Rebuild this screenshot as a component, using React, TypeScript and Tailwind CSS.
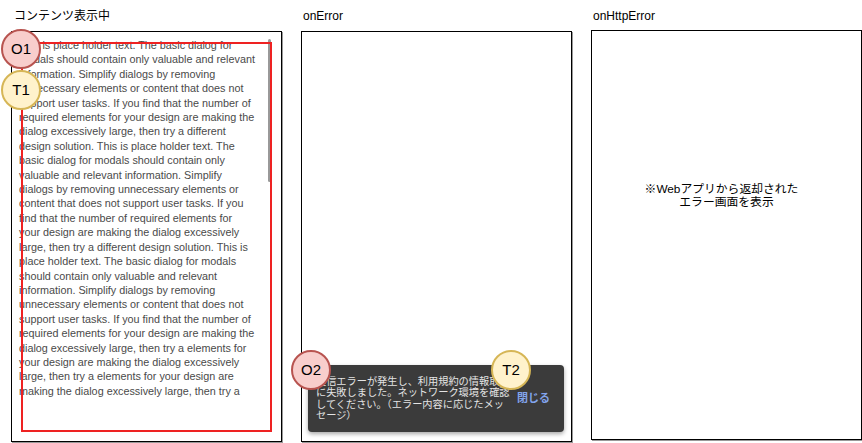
const bodyLines = [
  "This is place holder text. The basic dialog for",
  "modals should contain only valuable and relevant",
  "information. Simplify dialogs by removing",
  "unnecessary elements or content that does not",
  "support user tasks. If you find that the number of",
  "required elements for your design are making the",
  "dialog excessively large, then try a different",
  "design solution. This is place holder text. The",
  "basic dialog for modals should contain only",
  "valuable and relevant information. Simplify",
  "dialogs by removing unnecessary elements or",
  "content that does not support user tasks. If you",
  "find that the number of required elements for",
  "your design are making the dialog excessively",
  "large, then try a different design solution. This is",
  "place holder text. The basic dialog for modals",
  "should contain only valuable and relevant",
  "information. Simplify dialogs by removing",
  "unnecessary elements or content that does not",
  "support user tasks. If you find that the number of",
  "required elements for your design are making the",
  "dialog excessively large, then try a elements for",
  "your design are making the dialog excessively",
  "large, then try a elements for your design are",
  "making the dialog excessively large, then try a",
];

const sans = "font-['Liberation_Sans','Noto_Sans_CJK_JP',sans-serif]";

function Marker({ label, tone, className }: { label: string; tone: "red" | "yellow"; className: string }) {
  const colors =
    tone === "red"
      ? "bg-[#f8cecc] border-[#b85450]"
      : "bg-[#fff2cc] border-[#d6b656]";
  return (
    <div
      className={`absolute z-10 flex h-[40px] w-[40px] items-center justify-center rounded-full border-2 text-[15px] text-black ${colors} ${className}`}
    >
      {label}
    </div>
  );
}

function Title({ children, className = "" }: { children: React.ReactNode; className?: string }) {
  return <div className={`h-[14px] text-[12px] leading-[14px] text-black ${className}`}>{children}</div>;
}

export default function App() {
  return (
    <div className={`flex h-[443px] w-[862px] gap-[19px] overflow-hidden bg-white pl-[11px] pt-[9px] ${sans}`}>
      {/* コンテンツ表示中 */}
      <div className="flex w-[271px] flex-col">
        <Title className="mb-[8px] pl-[3px]">コンテンツ表示中</Title>
        <div className="relative h-[411px] w-[271px] border border-black shadow-[1px_1px_0_#999]">
          <div className="h-full overflow-hidden pl-[7px] pt-[6px] text-[10.8px] leading-[14.4px] text-[#4a4a4a]">
            {bodyLines.map((line, i) => (
              <div key={i} className="whitespace-nowrap">
                {line}
              </div>
            ))}
          </div>
          <div className="absolute left-[256px] top-[7px] h-[143px] w-[3px] rounded-full bg-[#999]" />
          <div className="absolute left-[9px] top-[10px] h-[390px] w-[251px] border-2 border-[#ee2222]" />
          <Marker label="O1" tone="red" className="left-[-11px] top-[-3px]" />
          <Marker label="T1" tone="yellow" className="left-[-11px] top-[38px]" />
        </div>
      </div>

      {/* onError */}
      <div className="flex w-[271px] flex-col">
        <Title className="mb-[8px] pl-[2px]">onError</Title>
        <div className="relative flex h-[411px] w-[271px] flex-col justify-end border border-black pb-[9px] pl-[6px] pr-[7px] shadow-[1px_1px_0_#999]">
          <div className="flex h-[67px] items-center rounded-[4px] bg-[#3b3b3b] pl-[8px] pr-[14px] shadow-[0_2px_4px_rgba(0,0,0,0.35)]">
            <p className="w-[196px] text-[10.2px] leading-[11.5px] text-[#e4e4e4]">
              通信エラーが発生し、利用規約の情報取得に失敗しました。ネットワーク環境を確認してください。（エラー内容に応じたメッセージ）
            </p>
            <span className="ml-auto text-[11px] font-bold text-[#82a4ec]">閉じる</span>
          </div>
          <Marker label="O2" tone="red" className="left-[-11px] top-[318px]" />
          <Marker label="T2" tone="yellow" className="left-[189px] top-[318px]" />
        </div>
      </div>

      {/* onHttpError */}
      <div className="flex w-[271px] flex-col">
        <Title className="mb-[7px] pl-[2px]">onHttpError</Title>
        <div className="h-[410px] w-[271px] border border-black pt-[152px] text-center text-[11.8px] leading-[12.7px] text-black shadow-[1px_1px_0_#999]">
          <div className="pr-[10px]">※Webアプリから返却された</div>
          <div>エラー画面を表示</div>
        </div>
      </div>
    </div>
  );
}
